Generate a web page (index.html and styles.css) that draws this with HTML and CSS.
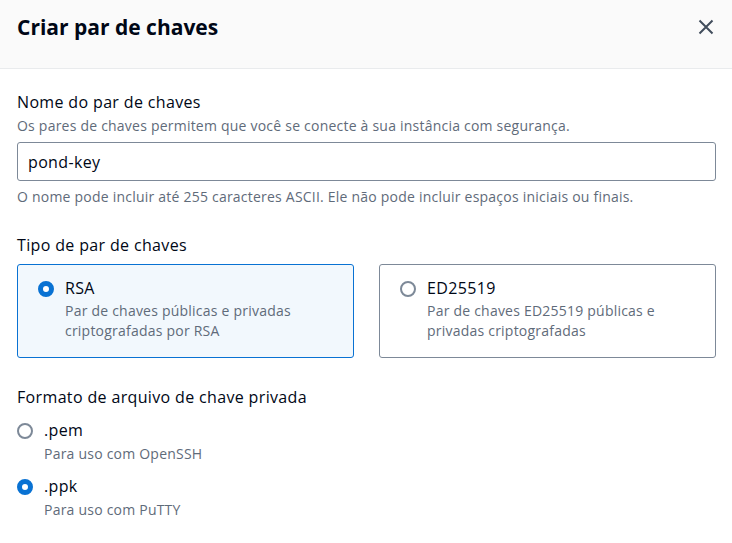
FILE: index.html
```
<!DOCTYPE html>
<html lang="pt">
<head>
<meta charset="utf-8">
<link rel="stylesheet" href="styles.css">
</head>
<body>
<div class="modal">
  <header class="modal-header">
    <h1 class="modal-title">Criar par de chaves</h1>
    <button class="close-btn" aria-label="Fechar">
      <svg width="16" height="16" viewBox="0 0 16 16"><path d="M1.5 1.5 L14.5 14.5 M14.5 1.5 L1.5 14.5" stroke="#414d5c" stroke-width="2" fill="none"/></svg>
    </button>
  </header>
  <div class="modal-body">
    <div class="field">
      <div class="label">Nome do par de chaves</div>
      <div class="desc">Os pares de chaves permitem que você se conecte à sua instância com segurança.</div>
      <div class="input">pond-key</div>
      <div class="hint">O nome pode incluir até 255 caracteres ASCII. Ele não pode incluir espaços iniciais ou finais.</div>
    </div>

    <div class="field field-type">
      <div class="label">Tipo de par de chaves</div>
      <div class="cards">
        <div class="card card-selected">
          <span class="radio radio-on"></span>
          <div class="opt-text">
            <div class="opt-label">RSA</div>
            <div class="opt-desc">Par de chaves públicas e privadas<br>criptografadas por RSA</div>
          </div>
        </div>
        <div class="card">
          <span class="radio"></span>
          <div class="opt-text">
            <div class="opt-label">ED25519</div>
            <div class="opt-desc">Par de chaves ED25519 públicas e<br>privadas criptografadas</div>
          </div>
        </div>
      </div>
    </div>

    <div class="field field-format">
      <div class="label">Formato de arquivo de chave privada</div>
      <div class="radio-list">
        <div class="radio-item">
          <span class="radio"></span>
          <div class="opt-text">
            <div class="opt-label">.pem</div>
            <div class="opt-desc">Para uso com OpenSSH</div>
          </div>
        </div>
        <div class="radio-item">
          <span class="radio radio-on"></span>
          <div class="opt-text">
            <div class="opt-label">.ppk</div>
            <div class="opt-desc">Para uso com PuTTY</div>
          </div>
        </div>
      </div>
    </div>
  </div>
</div>
</body>
</html>
```

FILE: styles.css
```
* { box-sizing: border-box; }
html, body { margin: 0; padding: 0; background: #ffffff; }
body {
  font-family: "Open Sans", "Noto Sans", sans-serif;
  color: #000716;
  width: 732px;
  height: 543px;
  overflow: hidden;
}
.modal-header {
  height: 69px;
  background: #fafafa;
  border-bottom: 1px solid #e9ebed;
  display: flex;
  align-items: flex-start;
  justify-content: space-between;
  padding: 13px 18px 0 17px;
}
.modal-title {
  margin: 0;
  font-size: 21px;
  line-height: 28px;
  font-weight: 700;
  color: #000716;
}
.close-btn {
  border: 0;
  background: transparent;
  padding: 0;
  margin-top: 6px;
  width: 16px;
  height: 16px;
  display: flex;
}
.modal-body {
  padding: 22px 16px 0 17px;
}
.label, .opt-label, .input {
  font-size: 16px;
  line-height: 22px;
  letter-spacing: 0.35px;
  color: #000716;
}
.desc, .hint, .opt-desc {
  font-size: 14px;
  line-height: 20px;
  letter-spacing: 0.22px;
  color: #5f6b7a;
}
.desc { margin-top: 3px; }
.input {
  margin-top: 6px;
  height: 39px;
  border: 1px solid #7d8998;
  border-radius: 3px;
  padding: 0 10px;
  display: flex;
  align-items: center;
}
.hint { margin-top: 6px; }
.field-type { margin-top: 27px; }
.cards {
  margin-top: 8px;
  display: grid;
  grid-template-columns: 1fr 1fr;
  gap: 25px;
}
.card {
  border: 1px solid #7d8998;
  border-radius: 3px;
  padding: 12px 20px 16px 20px;
  display: flex;
  gap: 11px;
  align-items: flex-start;
}
.card-selected {
  background: #f2f8fd;
  border-color: #0972d3;
}
.radio {
  flex: none;
  width: 16px;
  height: 16px;
  border-radius: 50%;
  border: 2px solid #7d8998;
  background: #ffffff;
  margin-top: 4px;
}
.radio-on {
  border: 5px solid #0972d3;
}
.opt-desc { margin-top: 2px; }
.field-format { margin-top: 28px; }
.radio-list {
  margin-top: 11px;
  display: flex;
  flex-direction: column;
  gap: 11px;
}
.radio-item {
  display: flex;
  gap: 10px;
  align-items: flex-start;
}
.radio-item .opt-desc { margin-top: 3px; }
.radio-item .opt-text { padding-left: 1px; }
```
